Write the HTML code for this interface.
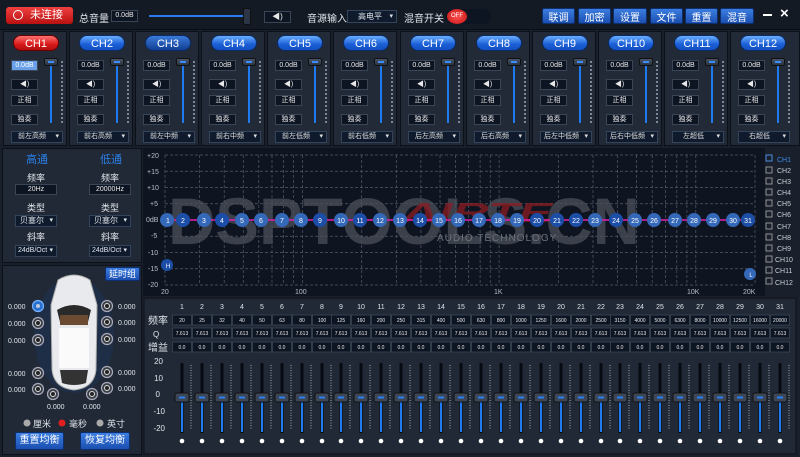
<!DOCTYPE html>
<html><head><meta charset="utf-8"><style>
*{margin:0;padding:0;box-sizing:border-box}
body{width:800px;height:457px;overflow:hidden;background:#1a202b;font-family:"Liberation Sans","Noto Sans CJK SC",sans-serif;color:#dfe4ea;position:relative}
.a{position:absolute}
.box{position:absolute;background:#0d1422;border:1px solid #3a4556;color:#e8e8e8;font-size:7px;text-align:center;line-height:9px}
.btn{position:absolute;background:linear-gradient(#3c7de0,#1a4fb0);border:1px solid #0d2f70;color:#fff;font-size:10px;text-align:center;border-radius:2px}
.st{position:absolute;top:31px;width:64px;height:115px;background:#232a37;border:1px solid #0c1018}
.ch{position:absolute;left:9px;top:3px;width:46px;height:16px;border-radius:8px;background:linear-gradient(#6aaeff,#1a5ed6 60%,#1450c0);color:#fff;font-size:11px;text-align:center;line-height:16px;border:1px solid #0a2b66}
.st .box{left:7px;width:27px;height:11px}
.st .sel{position:absolute;left:7px;top:99px;width:52px;height:12px;background:#0f1a2c;border:1px solid #34445a;font-size:7px;line-height:10px;padding-left:6px;color:#e0e0e0}
.sel:after{content:"▾";position:absolute;right:3px;top:0;font-size:7px}
.th{position:absolute;left:40px;top:26px;width:14px;height:8px;background:linear-gradient(#4a5566,#2a3340);border:1px solid #111;border-radius:2px}
.th:after{content:"";position:absolute;left:3px;top:2px;width:6px;height:2px;background:#3a8cff}
.tr{position:absolute;left:46px;top:34px;width:2px;height:57px;background:#1f7af0}
.tk{position:absolute;left:57px;top:29px;width:2px;height:62px;border-left:2px dotted #7d8694}
.lb{position:absolute;font-size:9px;color:#dfe4ea}
</style></head><body>
<div class="a" style="left:0;top:0;width:800px;height:30px;background:#141a24;border-bottom:1px solid #0a0d13"></div>
<div class="a" style="left:6px;top:7px;width:67px;height:17px;background:linear-gradient(#f04040,#b81010);border-radius:3px;color:#fff;font-size:11px;line-height:17px;padding-left:24px">未连接</div>
<div class="a" style="left:13px;top:10px;width:10px;height:10px;border:1.5px solid #fff;border-radius:50%"></div>
<div class="lb" style="left:79px;top:10px;font-size:10px">总音量</div>
<div class="box" style="left:111px;top:10px;width:27px;height:12px;line-height:10px">0.0dB</div>
<div class="a" style="left:149px;top:15px;width:96px;height:2px;background:#2a7aef"></div>
<div class="a" style="left:243px;top:8px;width:8px;height:17px;background:#2b3545;border:1px solid #111;border-radius:2px"></div>
<div class="box" style="left:264px;top:11px;width:27px;height:12px;line-height:10px;font-size:8px">◀)</div>
<div class="lb" style="left:307px;top:10px;font-size:10px">音源输入</div>
<div class="a sel" style="position:absolute;left:347px;top:10px;width:50px;height:13px;background:#0f1a2c;border:1px solid #34445a;font-size:8px;line-height:11px;padding-left:10px">高电平</div>
<div class="lb" style="left:404px;top:10px;font-size:10px">混音开关</div>
<div class="a" style="left:446px;top:9px;width:45px;height:15px;background:#0e1522;border-radius:8px"></div>
<div class="a" style="left:447px;top:9px;width:20px;height:15px;background:radial-gradient(#ff5050,#c01010);border-radius:50%;color:#fff;font-size:6px;line-height:15px;text-align:center">OFF</div>
<div class="btn" style="left:542px;top:8px;width:33px;height:16px">联调</div>
<div class="btn" style="left:578px;top:8px;width:33px;height:16px">加密</div>
<div class="btn" style="left:613px;top:8px;width:34px;height:16px">设置</div>
<div class="btn" style="left:650px;top:8px;width:33px;height:16px">文件</div>
<div class="btn" style="left:685px;top:8px;width:33px;height:16px">重置</div>
<div class="btn" style="left:720px;top:8px;width:34px;height:16px">混音</div>
<div class="a" style="left:763px;top:14px;width:9px;height:2px;background:#fff"></div>
<div class="lb" style="left:780px;top:5px;font-size:15px;font-weight:bold;color:#fff">×</div>

<div class="st" style="left:3px"><div class="ch" style="background:linear-gradient(#ff7070,#d81818 60%,#b01010);border-color:#600">CH1</div><div class="box" style="top:28px;background:#6aa0e8;color:#fff">0.0dB</div><div class="box" style="top:47px">◀)</div><div class="box" style="top:63px">正相</div><div class="box" style="top:82px">独奏</div><div class="th"></div><div class="tr"></div><div class="tk"></div><div class="sel">前左高频</div></div>
<div class="st" style="left:69px"><div class="ch">CH2</div><div class="box" style="top:28px">0.0dB</div><div class="box" style="top:47px">◀)</div><div class="box" style="top:63px">正相</div><div class="box" style="top:82px">独奏</div><div class="th"></div><div class="tr"></div><div class="tk"></div><div class="sel">前右高频</div></div>
<div class="st" style="left:135px"><div class="ch" style="background:linear-gradient(#3a7ad8,#123f96)">CH3</div><div class="box" style="top:28px">0.0dB</div><div class="box" style="top:47px">◀)</div><div class="box" style="top:63px">正相</div><div class="box" style="top:82px">独奏</div><div class="th"></div><div class="tr"></div><div class="tk"></div><div class="sel">前左中频</div></div>
<div class="st" style="left:201px"><div class="ch">CH4</div><div class="box" style="top:28px">0.0dB</div><div class="box" style="top:47px">◀)</div><div class="box" style="top:63px">正相</div><div class="box" style="top:82px">独奏</div><div class="th"></div><div class="tr"></div><div class="tk"></div><div class="sel">前右中频</div></div>
<div class="st" style="left:267px"><div class="ch">CH5</div><div class="box" style="top:28px">0.0dB</div><div class="box" style="top:47px">◀)</div><div class="box" style="top:63px">正相</div><div class="box" style="top:82px">独奏</div><div class="th"></div><div class="tr"></div><div class="tk"></div><div class="sel">前左低频</div></div>
<div class="st" style="left:333px"><div class="ch">CH6</div><div class="box" style="top:28px">0.0dB</div><div class="box" style="top:47px">◀)</div><div class="box" style="top:63px">正相</div><div class="box" style="top:82px">独奏</div><div class="th"></div><div class="tr"></div><div class="tk"></div><div class="sel">前右低频</div></div>
<div class="st" style="left:400px"><div class="ch">CH7</div><div class="box" style="top:28px">0.0dB</div><div class="box" style="top:47px">◀)</div><div class="box" style="top:63px">正相</div><div class="box" style="top:82px">独奏</div><div class="th"></div><div class="tr"></div><div class="tk"></div><div class="sel">后左高频</div></div>
<div class="st" style="left:466px"><div class="ch">CH8</div><div class="box" style="top:28px">0.0dB</div><div class="box" style="top:47px">◀)</div><div class="box" style="top:63px">正相</div><div class="box" style="top:82px">独奏</div><div class="th"></div><div class="tr"></div><div class="tk"></div><div class="sel">后右高频</div></div>
<div class="st" style="left:532px"><div class="ch">CH9</div><div class="box" style="top:28px">0.0dB</div><div class="box" style="top:47px">◀)</div><div class="box" style="top:63px">正相</div><div class="box" style="top:82px">独奏</div><div class="th"></div><div class="tr"></div><div class="tk"></div><div class="sel" style="padding-left:3px">后左中低频</div></div>
<div class="st" style="left:598px"><div class="ch">CH10</div><div class="box" style="top:28px">0.0dB</div><div class="box" style="top:47px">◀)</div><div class="box" style="top:63px">正相</div><div class="box" style="top:82px">独奏</div><div class="th"></div><div class="tr"></div><div class="tk"></div><div class="sel" style="padding-left:3px">后右中低频</div></div>
<div class="st" style="left:664px"><div class="ch">CH11</div><div class="box" style="top:28px">0.0dB</div><div class="box" style="top:47px">◀)</div><div class="box" style="top:63px">正相</div><div class="box" style="top:82px">独奏</div><div class="th"></div><div class="tr"></div><div class="tk"></div><div class="sel" style="padding-left:10px">左超低</div></div>
<div class="st" style="left:730px;width:70px"><div class="ch">CH12</div><div class="box" style="top:28px">0.0dB</div><div class="box" style="top:47px">◀)</div><div class="box" style="top:63px">正相</div><div class="box" style="top:82px">独奏</div><div class="th"></div><div class="tr"></div><div class="tk"></div><div class="sel" style="padding-left:10px">右超低</div></div>

<div class="a" style="left:2px;top:148px;width:140px;height:115px;background:#222936;border:1px solid #0c1018"></div>
<div class="lb" style="left:26px;top:151px;font-size:11px;color:#2a80e8">高通</div>
<div class="lb" style="left:100px;top:151px;font-size:11px;color:#2a80e8">低通</div>
<div class="lb" style="left:27px;top:171px">频率</div><div class="lb" style="left:101px;top:171px">频率</div>
<div class="box" style="left:15px;top:184px;width:42px;height:11px">20Hz</div>
<div class="box" style="left:89px;top:184px;width:42px;height:11px">20000Hz</div>
<div class="lb" style="left:27px;top:201px">类型</div><div class="lb" style="left:101px;top:201px">类型</div>
<div class="sel" style="position:absolute;left:15px;top:215px;width:42px;height:12px;background:#0f1a2c;border:1px solid #34445a;font-size:8px;line-height:10px;padding-left:4px">贝塞尔</div>
<div class="sel" style="position:absolute;left:89px;top:215px;width:42px;height:12px;background:#0f1a2c;border:1px solid #34445a;font-size:8px;line-height:10px;padding-left:4px">贝塞尔</div>
<div class="lb" style="left:27px;top:230px">斜率</div><div class="lb" style="left:101px;top:230px">斜率</div>
<div class="sel" style="position:absolute;left:15px;top:245px;width:42px;height:12px;background:#0f1a2c;border:1px solid #34445a;font-size:7px;line-height:10px;padding-left:2px">24dB/Oct</div>
<div class="sel" style="position:absolute;left:89px;top:245px;width:42px;height:12px;background:#0f1a2c;border:1px solid #34445a;font-size:7px;line-height:10px;padding-left:2px">24dB/Oct</div>

<div class="a" style="left:2px;top:265px;width:140px;height:190px;background:#222936;border:1px solid #0c1018"></div>
<div class="btn" style="left:105px;top:267px;width:35px;height:14px;font-size:9px;line-height:12px">延时组</div>
<svg class="a" style="left:0;top:260px" width="145" height="160">
<ellipse cx="74" cy="75" rx="40" ry="58" fill="#1a3a66" opacity=".35"/>
<path d="M58 20 Q74 10 90 20 L97 45 L96 110 Q94 128 74 130 Q54 128 52 110 L51 45 Z" fill="#e8eaed" stroke="#aaa"/>
<path d="M57 50 Q74 40 91 50 L88 62 L60 62 Z" fill="#2a2a2a"/>
<rect x="60" y="55" width="28" height="10" fill="#6a4a30"/>
<rect x="59" y="68" width="30" height="40" fill="#fafafa"/>
<path d="M60 110 L88 110 L86 123 Q74 127 62 123 Z" fill="#333"/>
<defs><g id="sp"><circle r="5.5" fill="#3a3f47" stroke="#aab" stroke-width="1.2"/><circle r="2.5" fill="#222" stroke="#ddd" stroke-width="1"/></g></defs>
<circle cx="38" cy="46" r="5.5" fill="#2a70d0" stroke="#7ab4ff" stroke-width="1.2"/><circle cx="38" cy="46" r="2" fill="#bcd"/>
<use href="#sp" x="38" y="63"/><use href="#sp" x="38" y="80"/><use href="#sp" x="38" y="113"/><use href="#sp" x="38" y="129"/><use href="#sp" x="53" y="134"/>
<use href="#sp" x="107" y="46"/><use href="#sp" x="107" y="62"/><use href="#sp" x="107" y="79"/><use href="#sp" x="107" y="112"/><use href="#sp" x="107" y="128"/><use href="#sp" x="92" y="134"/>
<g fill="#dfe4ea" font-size="7" font-family="Liberation Sans">
<text x="8" y="49">0.000</text><text x="8" y="66">0.000</text><text x="8" y="83">0.000</text><text x="8" y="116">0.000</text><text x="8" y="132">0.000</text>
<text x="118" y="49">0.000</text><text x="118" y="65">0.000</text><text x="118" y="82">0.000</text><text x="118" y="115">0.000</text><text x="118" y="131">0.000</text>
<text x="47" y="149">0.000</text><text x="83" y="149">0.000</text></g>
</svg>
<svg class="a" style="left:0;top:415px" width="145" height="15"><circle cx="27" cy="8" r="3.5" fill="#aaa"/><circle cx="62" cy="8" r="3.5" fill="#e02020"/><circle cx="100" cy="8" r="3.5" fill="#aaa"/></svg>
<div class="lb" style="left:33px;top:417px">厘米</div><div class="lb" style="left:69px;top:417px">毫秒</div><div class="lb" style="left:107px;top:417px">英寸</div>
<div class="btn" style="left:15px;top:432px;width:49px;height:18px;line-height:16px">重置均衡</div>
<div class="btn" style="left:80px;top:432px;width:50px;height:18px;line-height:16px">恢复均衡</div>

<svg class="a" style="left:143px;top:148px" width="657" height="150">
<rect x="0" y="0" width="622" height="148" fill="#0f1421"/>
<g stroke="#555c68" stroke-width=".7" stroke-dasharray="3,2" transform="translate(-143,-148)">
<path d="M165 155H755M165 171.25H755M165 187.5H755M165 203.75H755M165 236.25H755M165 252.5H755M165 268.75H755M165 285H755"/>
<path d="M165 155V285M199.6 155V285M224.2 155V285M243.3 155V285M258.8 155V285M272 155V285M283.4 155V285M293.5 155V285M302.5 155V285M361.7 155V285M396.3 155V285M420.9 155V285M440 155V285M455.5 155V285M468.7 155V285M480.1 155V285M490.2 155V285M499.1 155V285M558.3 155V285M593 155V285M617.6 155V285M636.6 155V285M652.2 155V285M665.4 155V285M676.8 155V285M686.9 155V285M695.8 155V285M755 155V285"/>
</g>
<g transform="translate(-143,-148)">
<text x="168" y="244" font-size="66" font-weight="bold" fill="#4a4f58" opacity=".75" font-family="Liberation Sans" textLength="472" lengthAdjust="spacingAndGlyphs">DSPTOOLS.CN</text>
<text x="402" y="222" font-size="28" font-weight="bold" font-style="italic" fill="#8a1d22" opacity=".75" font-family="Liberation Sans" textLength="150" lengthAdjust="spacingAndGlyphs">AIRTE</text>
<text x="437" y="241" font-size="10" fill="#6a6f78" font-family="Liberation Sans" letter-spacing="1">AUDIO TECHNOLOGY</text>
<line x1="165" y1="220" x2="755" y2="220" stroke="#e020b0" stroke-width="1.5"/>
<g font-size="7" fill="#b8bec8" font-family="Liberation Sans">
<text x="147" y="158">+20</text><text x="147" y="174">+15</text><text x="147" y="190">+10</text><text x="150" y="206">+5</text><text x="146" y="222">0dB</text><text x="151" y="238">-5</text><text x="148" y="255">-10</text><text x="148" y="271">-15</text><text x="148" y="287">-20</text>
<text x="161" y="294">20</text><text x="295" y="294">100</text><text x="494" y="294">1K</text><text x="687" y="294">10K</text><text x="743" y="294">20K</text></g>
<g fill="#3468b8"><circle cx="167" cy="220" r="7"/><circle cx="183" cy="220" r="7" fill="#1c4ea8"/><circle cx="204" cy="220" r="7"/><circle cx="222" cy="220" r="7" fill="#1c4ea8"/><circle cx="242" cy="220" r="7"/><circle cx="261" cy="220" r="7"/><circle cx="282" cy="220" r="7"/><circle cx="301" cy="220" r="7"/><circle cx="320" cy="220" r="7" fill="#1c4ea8"/><circle cx="341" cy="220" r="7"/><circle cx="360" cy="220" r="7" fill="#1c4ea8"/><circle cx="380" cy="220" r="7"/><circle cx="400" cy="220" r="7"/><circle cx="420" cy="220" r="7" fill="#1c4ea8"/><circle cx="439" cy="220" r="7"/><circle cx="458" cy="220" r="7"/><circle cx="479" cy="220" r="7"/><circle cx="498" cy="220" r="7"/><circle cx="517" cy="220" r="7"/><circle cx="537" cy="220" r="7" fill="#1c4ea8"/><circle cx="557" cy="220" r="7" fill="#1c4ea8"/><circle cx="576" cy="220" r="7" fill="#1c4ea8"/><circle cx="595" cy="220" r="7"/><circle cx="616" cy="220" r="7" fill="#1c4ea8"/><circle cx="635" cy="220" r="7"/><circle cx="654" cy="220" r="7"/><circle cx="675" cy="220" r="7"/><circle cx="694" cy="220" r="7"/><circle cx="713" cy="220" r="7"/><circle cx="733" cy="220" r="7"/><circle cx="748" cy="220" r="7" fill="#1c4ea8"/>
<circle cx="167" cy="265" r="6" fill="#1c4ea8"/><circle cx="750" cy="274" r="6"/></g>
<g font-size="7" fill="#fff" text-anchor="middle" font-family="Liberation Sans">
<text x="168" y="223">1</text><text x="183" y="223">2</text><text x="204" y="223">3</text><text x="222" y="223">4</text><text x="242" y="223">5</text><text x="261" y="223">6</text><text x="282" y="223">7</text><text x="301" y="223">8</text><text x="320" y="223">9</text><text x="341" y="223">10</text><text x="360" y="223">11</text><text x="380" y="223">12</text><text x="400" y="223">13</text><text x="420" y="223">14</text><text x="439" y="223">15</text><text x="458" y="223">16</text><text x="479" y="223">17</text><text x="498" y="223">18</text><text x="517" y="223">19</text><text x="537" y="223">20</text><text x="557" y="223">21</text><text x="576" y="223">22</text><text x="595" y="223">23</text><text x="616" y="223">24</text><text x="635" y="223">25</text><text x="654" y="223">26</text><text x="675" y="223">27</text><text x="694" y="223">28</text><text x="713" y="223">29</text><text x="733" y="223">30</text><text x="748" y="223">31</text>
<text x="168" y="268" font-size="6">H</text><text x="751" y="277" font-size="6">L</text></g>
</g>
<g transform="translate(-143,-148)" font-size="7" fill="#c8ccd4" font-family="Liberation Sans">
<rect x="766" y="155" width="6" height="6" fill="none" stroke="#4a8ae0"/><text x="777" y="162" fill="#3a8ae8">CH1</text>
<g fill="none" stroke="#aaa" stroke-width=".8"><rect x="766" y="167" width="6" height="6"/><rect x="766" y="178" width="6" height="6"/><rect x="766" y="189" width="6" height="6"/><rect x="766" y="200" width="6" height="6"/><rect x="766" y="211" width="6" height="6"/><rect x="766" y="223" width="6" height="6"/><rect x="766" y="234" width="6" height="6"/><rect x="766" y="245" width="6" height="6"/><rect x="766" y="256" width="6" height="6"/><rect x="766" y="267" width="6" height="6"/><rect x="766" y="278" width="6" height="6"/></g>
<text x="777" y="173">CH2</text><text x="777" y="184">CH3</text><text x="777" y="195">CH4</text><text x="777" y="206">CH5</text><text x="777" y="217">CH6</text><text x="777" y="229">CH7</text><text x="777" y="240">CH8</text><text x="777" y="251">CH9</text><text x="775" y="262">CH10</text><text x="775" y="273">CH11</text><text x="775" y="285">CH12</text>
</g>
</svg>

<svg class="a" style="left:0;top:0" width="800" height="457">
<defs><g id="sl"><rect x="-1.5" y="363" width="3" height="70" fill="#070a10"/><rect x="-1" y="402" width="2" height="30" fill="#1f7af0"/><line x1="9" y1="365" x2="9" y2="430" stroke="#8a929e" stroke-dasharray="1,1.5" stroke-width="1.2"/><rect x="-7" y="393" width="14" height="9" rx="2" fill="#3c4656" stroke="#111"/><rect x="-3" y="396.5" width="6" height="2" fill="#2a80f0"/><circle cx="0" cy="441" r="2.3" fill="#fff"/></g></defs>
<rect x="144" y="298" width="652" height="156" fill="#222936" stroke="#0c1018"/>
<g font-size="10" fill="#dfe4ea" font-family="Liberation Sans,Noto Sans CJK SC"><text x="148" y="324">频率</text><text x="153" y="337" font-size="8">Q</text><text x="148" y="351">增益</text></g>
<g font-size="8" fill="#dfe4ea" text-anchor="end" font-family="Liberation Sans"><text x="163" y="364">20</text><text x="163" y="381">10</text><text x="160" y="397">0</text><text x="165" y="414">-10</text><text x="165" y="431">-20</text></g>
<g><use href="#sl" x="182"/><use href="#sl" x="202"/><use href="#sl" x="222"/><use href="#sl" x="242"/><use href="#sl" x="262"/><use href="#sl" x="282"/><use href="#sl" x="302"/><use href="#sl" x="322"/><use href="#sl" x="341"/><use href="#sl" x="361"/><use href="#sl" x="381"/><use href="#sl" x="401"/><use href="#sl" x="421"/><use href="#sl" x="441"/><use href="#sl" x="461"/><use href="#sl" x="481"/><use href="#sl" x="501"/><use href="#sl" x="521"/><use href="#sl" x="541"/><use href="#sl" x="561"/><use href="#sl" x="581"/><use href="#sl" x="601"/><use href="#sl" x="620"/><use href="#sl" x="640"/><use href="#sl" x="660"/><use href="#sl" x="680"/><use href="#sl" x="700"/><use href="#sl" x="720"/><use href="#sl" x="740"/><use href="#sl" x="760"/><use href="#sl" x="780"/></g>
<defs><g id="bx"><rect x="-9.5" y="315" width="19" height="10" fill="#0d1422" stroke="#3a4556" stroke-width=".8"/><rect x="-9.5" y="328" width="19" height="10" fill="#0d1422" stroke="#3a4556" stroke-width=".8"/><rect x="-9.5" y="342" width="19" height="10" fill="#0d1422" stroke="#3a4556" stroke-width=".8"/></g></defs>
<g><use href="#bx" x="182"/><use href="#bx" x="202"/><use href="#bx" x="222"/><use href="#bx" x="242"/><use href="#bx" x="262"/><use href="#bx" x="282"/><use href="#bx" x="302"/><use href="#bx" x="322"/><use href="#bx" x="341"/><use href="#bx" x="361"/><use href="#bx" x="381"/><use href="#bx" x="401"/><use href="#bx" x="421"/><use href="#bx" x="441"/><use href="#bx" x="461"/><use href="#bx" x="481"/><use href="#bx" x="501"/><use href="#bx" x="521"/><use href="#bx" x="541"/><use href="#bx" x="561"/><use href="#bx" x="581"/><use href="#bx" x="601"/><use href="#bx" x="620"/><use href="#bx" x="640"/><use href="#bx" x="660"/><use href="#bx" x="680"/><use href="#bx" x="700"/><use href="#bx" x="720"/><use href="#bx" x="740"/><use href="#bx" x="760"/><use href="#bx" x="780"/></g>
<g font-size="7" fill="#dfe4ea" text-anchor="middle" font-family="Liberation Sans">
<text x="182" y="309">1</text><text x="202" y="309">2</text><text x="222" y="309">3</text><text x="242" y="309">4</text><text x="262" y="309">5</text><text x="282" y="309">6</text><text x="302" y="309">7</text><text x="322" y="309">8</text><text x="341" y="309">9</text><text x="361" y="309">10</text><text x="381" y="309">11</text><text x="401" y="309">12</text><text x="421" y="309">13</text><text x="441" y="309">14</text><text x="461" y="309">15</text><text x="481" y="309">16</text><text x="501" y="309">17</text><text x="521" y="309">18</text><text x="541" y="309">19</text><text x="561" y="309">20</text><text x="581" y="309">21</text><text x="601" y="309">22</text><text x="620" y="309">23</text><text x="640" y="309">24</text><text x="660" y="309">25</text><text x="680" y="309">26</text><text x="700" y="309">27</text><text x="720" y="309">28</text><text x="740" y="309">29</text><text x="760" y="309">30</text><text x="780" y="309">31</text>
</g>
<g font-size="5" fill="#e8e8e8" text-anchor="middle" font-family="Liberation Sans">
<text x="182" y="322">20</text><text x="202" y="322">25</text><text x="222" y="322">32</text><text x="242" y="322">40</text><text x="262" y="322">50</text><text x="282" y="322">63</text><text x="302" y="322">80</text><text x="322" y="322">100</text><text x="341" y="322">125</text><text x="361" y="322">160</text><text x="381" y="322">200</text><text x="401" y="322">250</text><text x="421" y="322">315</text><text x="441" y="322">400</text><text x="461" y="322">500</text><text x="481" y="322">630</text><text x="501" y="322">800</text><text x="521" y="322">1000</text><text x="541" y="322">1250</text><text x="561" y="322">1600</text><text x="581" y="322">2000</text><text x="601" y="322">2500</text><text x="620" y="322">3150</text><text x="640" y="322">4000</text><text x="660" y="322">5000</text><text x="680" y="322">6300</text><text x="700" y="322">8000</text><text x="720" y="322">10000</text><text x="740" y="322">12500</text><text x="760" y="322">16000</text><text x="780" y="322">20000</text>
<text x="182" y="335">7.613</text><text x="202" y="335">7.613</text><text x="222" y="335">7.613</text><text x="242" y="335">7.613</text><text x="262" y="335">7.613</text><text x="282" y="335">7.613</text><text x="302" y="335">7.613</text><text x="322" y="335">7.613</text><text x="341" y="335">7.613</text><text x="361" y="335">7.613</text><text x="381" y="335">7.613</text><text x="401" y="335">7.613</text><text x="421" y="335">7.613</text><text x="441" y="335">7.613</text><text x="461" y="335">7.613</text><text x="481" y="335">7.613</text><text x="501" y="335">7.613</text><text x="521" y="335">7.613</text><text x="541" y="335">7.613</text><text x="561" y="335">7.613</text><text x="581" y="335">7.613</text><text x="601" y="335">7.613</text><text x="620" y="335">7.613</text><text x="640" y="335">7.613</text><text x="660" y="335">7.613</text><text x="680" y="335">7.613</text><text x="700" y="335">7.613</text><text x="720" y="335">7.613</text><text x="740" y="335">7.613</text><text x="760" y="335">7.613</text><text x="780" y="335">7.613</text>
<text x="182" y="349">0.0</text><text x="202" y="349">0.0</text><text x="222" y="349">0.0</text><text x="242" y="349">0.0</text><text x="262" y="349">0.0</text><text x="282" y="349">0.0</text><text x="302" y="349">0.0</text><text x="322" y="349">0.0</text><text x="341" y="349">0.0</text><text x="361" y="349">0.0</text><text x="381" y="349">0.0</text><text x="401" y="349">0.0</text><text x="421" y="349">0.0</text><text x="441" y="349">0.0</text><text x="461" y="349">0.0</text><text x="481" y="349">0.0</text><text x="501" y="349">0.0</text><text x="521" y="349">0.0</text><text x="541" y="349">0.0</text><text x="561" y="349">0.0</text><text x="581" y="349">0.0</text><text x="601" y="349">0.0</text><text x="620" y="349">0.0</text><text x="640" y="349">0.0</text><text x="660" y="349">0.0</text><text x="680" y="349">0.0</text><text x="700" y="349">0.0</text><text x="720" y="349">0.0</text><text x="740" y="349">0.0</text><text x="760" y="349">0.0</text><text x="780" y="349">0.0</text>
</g>
</svg>
</body></html>
